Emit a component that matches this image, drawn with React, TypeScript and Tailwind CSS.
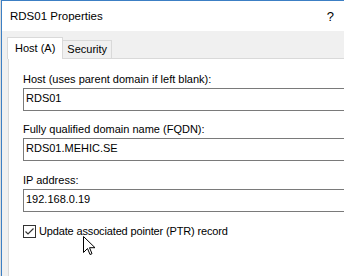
export default function App() {
  const font = { fontFamily: '"Liberation Sans", Arial, sans-serif' };
  return (
    <div
      className="relative w-[344px] h-[276px] overflow-hidden flex bg-white text-[11px] text-black"
      style={font}
    >
      {/* desktop sliver + window border */}
      <div className="w-px h-full bg-[#dcdcdc]" />
      <div className="w-px h-full bg-[#3c7fc4]" />

      <div className="flex-1 flex flex-col">
        {/* title bar */}
        <div className="h-[31px] border-t border-[#3c7fc4] bg-white flex items-center justify-between pl-[8px] pr-[8px]">
          <span className="text-[11.5px] leading-[15px] pt-px">RDS01 Properties</span>
          <span className="text-[13px] leading-[15px] pr-[2px]">?</span>
        </div>

        {/* body */}
        <div className="flex-1 bg-[#f0f0f0] pl-[6px] pt-[6px] flex flex-col">
          {/* tabs */}
          <div className="flex items-end h-[21px] relative z-10">
            <div className="h-[22px] -mb-px -ml-px bg-white border border-b-0 border-[#d9d9d9] px-[7px] flex items-center leading-[15px]">
              Host (A)
            </div>
            <div className="h-[18px] bg-[#f0f0f0] border border-l-0 border-b-0 border-[#d9d9d9] px-[4px] flex items-center leading-[15px]">
              Security
            </div>
          </div>

          {/* panel */}
          <div className="flex-1 bg-white border-t border-l border-[#d9d9d9] pl-[14px] pt-[13px] flex flex-col">
            <div className="leading-[15px]">Host (uses parent domain if left blank):</div>
            <div className="mt-px h-[23px] border border-r-0 border-[#7a7a7a] pl-[2px] leading-[15px] pt-[2px]">
              RDS01
            </div>

            <div className="mt-[11px] leading-[15px]">Fully qualified domain name (FQDN):</div>
            <div className="mt-px h-[23px] border border-r-0 border-[#7a7a7a] pl-[2px] leading-[15px] pt-[2px]">
              RDS01.MEHIC.SE
            </div>

            <div className="mt-[12px] leading-[15px]">IP address:</div>
            <div className="mt-px h-[23px] border border-r-0 border-[#7a7a7a] pl-[2px] leading-[15px] pt-[2px]">
              192.168.0.19
            </div>

            <div className="mt-[12px] flex items-center gap-[3px]">
              <div className="w-[13px] h-[13px] border border-[#333333] bg-white flex items-center justify-center">
                <svg width="11" height="11" viewBox="0 0 11 11">
                  <path d="M1.5 5.5 L4 8 L9.5 2.5" fill="none" stroke="#333333" strokeWidth="1.2" />
                </svg>
              </div>
              <span className="leading-[15px] tracking-[-0.15px]">Update associated pointer (PTR) record</span>
            </div>
          </div>
        </div>
      </div>

      {/* mouse cursor */}
      <svg
        className="absolute left-[83px] top-[236px]"
        width="13"
        height="21"
        viewBox="0 0 13 21"
      >
        <path
          d="M0.5 0.5 L0.5 16.5 L4.5 12.5 L7 18.5 L9 17.7 L6.5 11.7 L12 11.7 Z"
          fill="white"
          stroke="black"
          strokeWidth="1"
          strokeLinejoin="miter"
        />
      </svg>
    </div>
  );
}
